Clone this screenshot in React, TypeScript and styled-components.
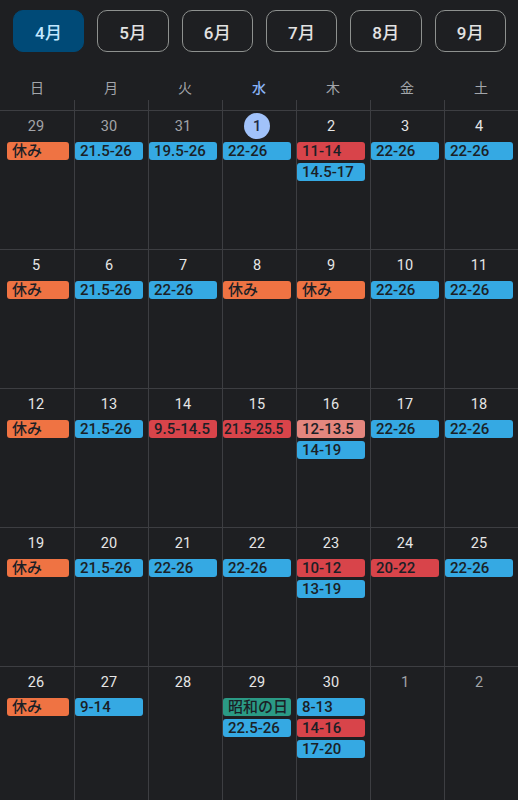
import React from "react"
import styled, { createGlobalStyle } from "styled-components"

type Tone = "off" | "work" | "busy" | "soft" | "holiday"

interface Shift {
  label: string
  tone: Tone
}

interface Day {
  date: number
  outside?: boolean
  today?: boolean
  shifts: Shift[]
}

const toneColors: Record<Tone, string> = {
  off: "#ef7343",
  work: "#35a9e3",
  busy: "#d8444a",
  soft: "#e4867e",
  holiday: "#2b9a85",
}

const GlobalStyle = createGlobalStyle`
  html, body {
    margin: 0;
    padding: 0;
    background: #1e1f22;
    overflow: hidden;
  }
  body {
    font-family: Roboto, "Noto Sans CJK JP", "Noto Sans", sans-serif;
  }
`

const Page = styled.div`
  width: 518px;
  height: 800px;
  background: #1e1f22;
  color: #e3e3e3;
  overflow: hidden;
`

const MonthBar = styled.div`
  display: flex;
  gap: 13px;
  padding: 10px 12px 0 13px;
`

const MonthButton = styled.button<{ $active?: boolean }>`
  flex: 1;
  height: 42px;
  border-radius: 10px;
  border: 1.5px solid ${(p) => (p.$active ? "#004a77" : "#8e918f")};
  background: ${(p) => (p.$active ? "#004a77" : "transparent")};
  color: ${(p) => (p.$active ? "#c2e7ff" : "#e3e3e3")};
  font-family: Roboto, "Noto Sans CJK JP", sans-serif;
  font-size: 17px;
  font-weight: 500;
  letter-spacing: 0.3px;
  padding: 0;
  cursor: pointer;
`

const WeekHeader = styled.div`
  display: grid;
  grid-template-columns: repeat(7, 1fr);
`

const WeekCell = styled.div`
  display: flex;
  flex-direction: column;
`

const WeekLabel = styled.div<{ $today?: boolean }>`
  height: 48px;
  display: flex;
  align-items: flex-end;
  justify-content: center;
  padding-bottom: 4px;
  box-sizing: border-box;
  font-size: 14px;
  line-height: 16px;
  color: ${(p) => (p.$today ? "#8ab4f8" : "#a3a6ab")};
  font-weight: ${(p) => (p.$today ? 500 : 400)};
`

const Tick = styled.div<{ $first?: boolean }>`
  height: 10px;
  border-left: ${(p) => (p.$first ? "none" : "1px solid #3d3e42")};
`

const Grid = styled.div`
  display: grid;
  grid-template-columns: repeat(7, 1fr);
`

const Cell = styled.div<{ $first?: boolean }>`
  height: 139px;
  box-sizing: border-box;
  border-top: 1px solid #3d3e42;
  border-left: ${(p) => (p.$first ? "none" : "1px solid #3d3e42")};
  padding: 2px 5px 0 ${(p) => (p.$first ? "7px" : "0")};
  display: flex;
  flex-direction: column;
  min-width: 0;
`

const DateRow = styled.div<{ $first?: boolean }>`
  height: 26px;
  display: flex;
  justify-content: center;
  align-items: center;
  margin-bottom: 3px;
  margin-left: ${(p) => (p.$first ? "-4px" : "0")};
`

const DateNum = styled.span<{ $outside?: boolean; $today?: boolean }>`
  width: 26px;
  height: 26px;
  border-radius: 50%;
  display: flex;
  align-items: center;
  justify-content: center;
  font-size: 14.5px;
  background: ${(p) => (p.$today ? "#a1c2fa" : "transparent")};
  color: ${(p) => (p.$today ? "#1d2a44" : p.$outside ? "#a2a4a8" : "#e6e6e6")};
  font-weight: ${(p) => (p.$today ? 500 : 400)};
`

const Chip = styled.div<{ $tone: Tone; $compact?: boolean }>`
  height: 18px;
  line-height: 18px;
  margin-bottom: 3px;
  border-radius: 3px;
  padding-left: ${(p) => (p.$compact ? "1px" : "5px")};
  background: ${(p) => toneColors[p.$tone]};
  color: #1b1f26;
  font-size: ${(p) => (p.$compact ? "13.8px" : "15px")};
  font-weight: 500;
  white-space: nowrap;
  overflow: hidden;
`

const months = ["4月", "5月", "6月", "7月", "8月", "9月"]
const weekdays = ["日", "月", "火", "水", "木", "金", "土"]

const w = (label: string): Shift => ({ label, tone: "work" })
const off: Shift = { label: "休み", tone: "off" }
const busy = (label: string): Shift => ({ label, tone: "busy" })

const days: Day[] = [
  { date: 29, outside: true, shifts: [off] },
  { date: 30, outside: true, shifts: [w("21.5-26")] },
  { date: 31, outside: true, shifts: [w("19.5-26")] },
  { date: 1, today: true, shifts: [w("22-26")] },
  { date: 2, shifts: [busy("11-14"), w("14.5-17")] },
  { date: 3, shifts: [w("22-26")] },
  { date: 4, shifts: [w("22-26")] },

  { date: 5, shifts: [off] },
  { date: 6, shifts: [w("21.5-26")] },
  { date: 7, shifts: [w("22-26")] },
  { date: 8, shifts: [off] },
  { date: 9, shifts: [off] },
  { date: 10, shifts: [w("22-26")] },
  { date: 11, shifts: [w("22-26")] },

  { date: 12, shifts: [off] },
  { date: 13, shifts: [w("21.5-26")] },
  { date: 14, shifts: [busy("9.5-14.5")] },
  { date: 15, shifts: [busy("21.5-25.5")] },
  { date: 16, shifts: [{ label: "12-13.5", tone: "soft" }, w("14-19")] },
  { date: 17, shifts: [w("22-26")] },
  { date: 18, shifts: [w("22-26")] },

  { date: 19, shifts: [off] },
  { date: 20, shifts: [w("21.5-26")] },
  { date: 21, shifts: [w("22-26")] },
  { date: 22, shifts: [w("22-26")] },
  { date: 23, shifts: [busy("10-12"), w("13-19")] },
  { date: 24, shifts: [busy("20-22")] },
  { date: 25, shifts: [w("22-26")] },

  { date: 26, shifts: [off] },
  { date: 27, shifts: [w("9-14")] },
  { date: 28, shifts: [] },
  { date: 29, shifts: [{ label: "昭和の日", tone: "holiday" }, w("22.5-26")] },
  { date: 30, shifts: [w("8-13"), busy("14-16"), w("17-20")] },
  { date: 1, outside: true, shifts: [] },
  { date: 2, outside: true, shifts: [] },
]

const App: React.FC = () => {
  return (
    <Page>
      <GlobalStyle />
      <MonthBar>
        {months.map((m, i) => (
          <MonthButton key={m} $active={i === 0}>
            {m}
          </MonthButton>
        ))}
      </MonthBar>
      <WeekHeader>
        {weekdays.map((d, i) => (
          <WeekCell key={d}>
            <WeekLabel $today={i === 3}>{d}</WeekLabel>
            <Tick $first={i === 0} />
          </WeekCell>
        ))}
      </WeekHeader>
      <Grid>
        {days.map((day, i) => (
          <Cell key={i} $first={i % 7 === 0}>
            <DateRow $first={i % 7 === 0}>
              <DateNum $outside={day.outside} $today={day.today}>
                {day.date}
              </DateNum>
            </DateRow>
            {day.shifts.map((s, j) => (
              <Chip key={j} $tone={s.tone} $compact={s.label.length > 8}>
                {s.label}
              </Chip>
            ))}
          </Cell>
        ))}
      </Grid>
    </Page>
  )
}

export default App
